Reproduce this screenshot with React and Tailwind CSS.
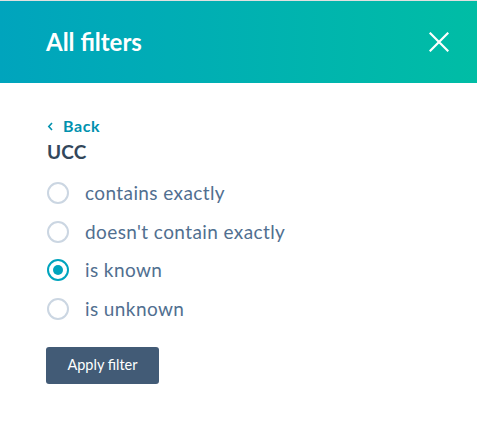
import React, { useState } from 'react';

const options = ['contains exactly', "doesn't contain exactly", 'is known', 'is unknown'];

const App = () => {
  const [selected, setSelected] = useState('is known');

  return (
    <div className="w-[477px] h-[426px] bg-white font-['Lato','Open_Sans',sans-serif] border-t border-[#e0e0e0]">
      {/* header */}
      <div className="h-[82px] flex items-center justify-between pl-[46px] pr-[26px] bg-gradient-to-r from-[#00a4bd] to-[#00bda5]">
        <h2 className="text-[24px] font-bold text-white leading-[28px]">All filters</h2>
        <button className="w-[24px] h-[24px] flex items-center justify-center">
          <svg width="20" height="20" viewBox="0 0 20 20" fill="none" stroke="white" strokeWidth="2.2" strokeLinecap="square">
            <path d="M1.5 1.5 L18.5 18.5 M18.5 1.5 L1.5 18.5" />
          </svg>
        </button>
      </div>

      <div className="pl-[47px] pt-[33px]">
        <button className="flex items-center gap-[9px] text-[#0091ae] text-[16px] font-bold leading-[20px] tracking-[0.6px]">
          <svg width="7" height="9" viewBox="0 0 7 9" fill="none" stroke="#0091ae" strokeWidth="1.6">
            <path d="M5 1 L1.8 4.5 L5 8" />
          </svg>
          Back
        </button>
        <div className="mt-[5px] text-[19px] font-bold text-[#33475b] leading-[22px] tracking-[0.2px]">UCC</div>

        <div className="mt-[19px] flex flex-col gap-[16.5px]">
          {options.map(opt => (
            <label key={opt} className="flex items-center gap-[16px] cursor-pointer" onClick={() => setSelected(opt)}>
              <span className={`w-[22px] h-[22px] rounded-full border-2 bg-white flex items-center justify-center ${selected === opt ? 'border-[#00a4bd]' : 'border-[#cbd6e2]'}`}>
                {selected === opt && <span className="w-[10px] h-[10px] rounded-full bg-[#00a4bd]" />}
              </span>
              <span className="text-[19px] text-[#516f90] leading-[22px] tracking-[0.4px]">{opt}</span>
            </label>
          ))}
        </div>

        <button className="mt-[27px] ml-[-1px] w-[113px] h-[37px] rounded-[3px] bg-[#425b76] text-white text-[14.5px]">
          Apply filter
        </button>
      </div>
    </div>
  );
};

export default App;
